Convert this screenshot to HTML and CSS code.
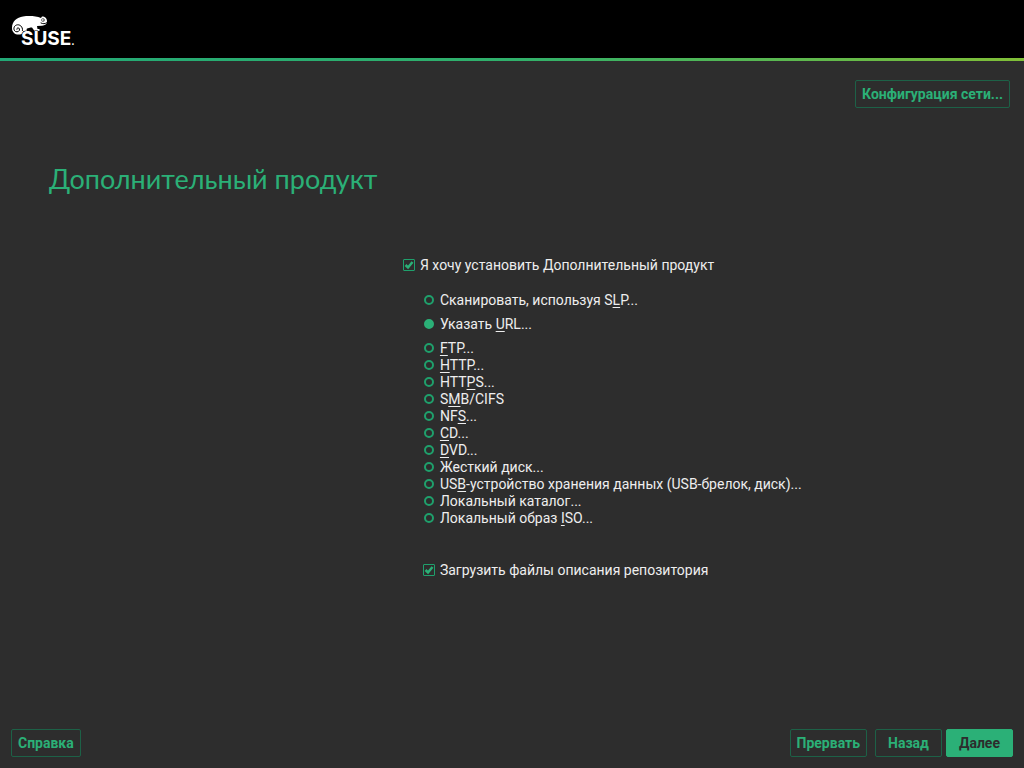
FILE: index.html
```html
<!DOCTYPE html>
<html lang="ru">
<head>
<meta charset="utf-8">
<title>Дополнительный продукт</title>
<link rel="stylesheet" href="styles.css">
</head>
<body>
<header class="banner">
  <svg class="logo" viewBox="0 0 68 40" role="img" aria-label="SUSE">
    <path fill="#fff" d="M1 14C1 7 6 3.500 12 2.500C18 1.500 25 2 30 4L31 2.500C34 2.500 36 4 36 7.500C36 10 34 11.500 31 11.800L26 12L26.500 15H28.500V17H23.500L21 13.500C19 13.500 17 14 15.500 15L16 17H12.500L12 19C10 21 5 21 3 19C1.500 17.500 1 16 1 14Z"/>
    <path fill="none" stroke="#000" stroke-width="1" stroke-linecap="round" d="M11.500 16.500C12 12.500 8.500 10 5.500 11C2.500 12 2 16 4.500 17.500C6.500 18.500 9 17 8.500 15C8 13.300 5.500 13.500 5.800 15.300M30 9C32 10 34 10 35.500 8.800"/>
    <circle cx="32" cy="6" r="1.500" fill="#fff" stroke="#000" stroke-width=".5"/>
    <circle cx="32.300" cy="6" r=".5"/>
    <text class="wordmark" x="10" y="31">SUSE<tspan class="dot">.</tspan></text>
  </svg>
</header>
<main class="page">
  <div class="toolbar"><button class="button" type="button">Конфигурация сети...</button></div>
  <h1 class="title">Дополнительный продукт</h1>
  <form class="options">
    <label class="choice"><input class="check" type="checkbox" checked>Я хочу установить Дополнительный продукт</label>
    <div class="sources">
      <label class="choice spaced"><input class="radio" type="radio" name="source"><span>Сканировать, используя S<u>L</u>P...</span></label>
      <label class="choice spaced"><input class="radio" type="radio" name="source" checked><span>Указать <u>U</u>RL...</span></label>
      <label class="choice"><input class="radio" type="radio" name="source"><span><u>F</u>TP...</span></label>
      <label class="choice"><input class="radio" type="radio" name="source"><span><u>H</u>TTP...</span></label>
      <label class="choice"><input class="radio" type="radio" name="source"><span>HTT<u>P</u>S...</span></label>
      <label class="choice"><input class="radio" type="radio" name="source"><span>S<u>M</u>B/CIFS</span></label>
      <label class="choice"><input class="radio" type="radio" name="source"><span>NF<u>S</u>...</span></label>
      <label class="choice"><input class="radio" type="radio" name="source"><span><u>C</u>D...</span></label>
      <label class="choice"><input class="radio" type="radio" name="source"><span><u>D</u>VD...</span></label>
      <label class="choice"><input class="radio" type="radio" name="source"><span>Жесткий диск...</span></label>
      <label class="choice"><input class="radio" type="radio" name="source"><span>US<u>B</u>-устройство хранения данных (USB-брелок, диск)...</span></label>
      <label class="choice"><input class="radio" type="radio" name="source"><span>Локальный каталог...</span></label>
      <label class="choice"><input class="radio" type="radio" name="source"><span>Локальный образ <u>I</u>SO...</span></label>
    </div>
    <label class="choice nested"><input class="check" type="checkbox" checked>Загрузить файлы описания репозитория</label>
  </form>
</main>
<footer class="actions">
  <button class="button help" type="button">Справка</button>
  <button class="button abort" type="button">Прервать</button>
  <button class="button step" type="button">Назад</button>
  <button class="button step primary" type="button">Далее</button>
</footer>
</body>
</html>
```
FILE: styles.css
```css
* { box-sizing: border-box; }
body {
  margin: 0;
  min-height: 100vh;
  display: flex;
  flex-direction: column;
  background: #2d2d2d;
  color: #eee;
  font: 14px/17px Roboto, sans-serif;
}
.banner {
  display: flex;
  padding: 14px 11px 4px;
  background: #000;
  border-bottom: 3px solid;
  border-image: linear-gradient(90deg, #22a876, #30b06b 50%, #81bf37) 1;
}
.logo { width: 68px; height: 40px; }
.wordmark {
  fill: #fff;
  stroke: #000;
  stroke-width: 1px;
  paint-order: stroke;
  font: 700 19px Inter, sans-serif;
}
.dot { font-size: 10px; }
.page { flex: 1; }
.toolbar { display: flex; justify-content: flex-end; padding: 19px 14px 0; }
.button {
  height: 28px;
  padding: 1px 6px 0;
  border: 1px solid #1d6147;
  border-radius: 2px;
  background: transparent;
  color: #2bb077;
  font: 700 14px/17px Roboto, sans-serif;
}
.title {
  margin: 53px 49px 0;
  color: #2bb077;
  font: 400 27px/36px Lato, sans-serif;
}
.options {
  display: flex;
  flex-direction: column;
  align-items: flex-start;
  margin: 60px 0 0 39.35%;
}
.choice { display: flex; align-items: center; gap: 5px; }
.sources { display: flex; flex-direction: column; margin: 18px 0 35px 21px; }
.sources .choice { gap: 6px; }
.spaced { margin-bottom: 7px; }
.nested { margin-left: 20px; }
.choice u { text-underline-offset: 2px; text-decoration-skip-ink: none; }
.check, .radio {
  appearance: none;
  flex: none;
  margin: 0 0 2px;
  border: 1px solid #1fa06c;
}
.check {
  width: 12px;
  height: 12px;
  border-radius: 1px;
  background: url("data:image/svg+xml,%3Csvg xmlns='http://www.w3.org/2000/svg' viewBox='0 0 10 10'%3E%3Cpath d='M1.500 5l2.500 2.500L8.500 2' fill='none' stroke='%232bb077' stroke-width='2.500'/%3E%3C/svg%3E");
}
.radio { width: 10px; height: 10px; border-width: 2px; border-radius: 50%; }
.radio:checked { background: #2bb077; border-color: #2bb077; }
.actions { display: flex; padding: 0 11px 11px; }
.help { margin-right: auto; }
.abort { margin-right: 8px; }
.step { min-width: 67px; }
.step + .step { margin-left: 4px; }
.primary { background: #2bb077; border-color: #2bb077; color: #2d2d2d; }
```
